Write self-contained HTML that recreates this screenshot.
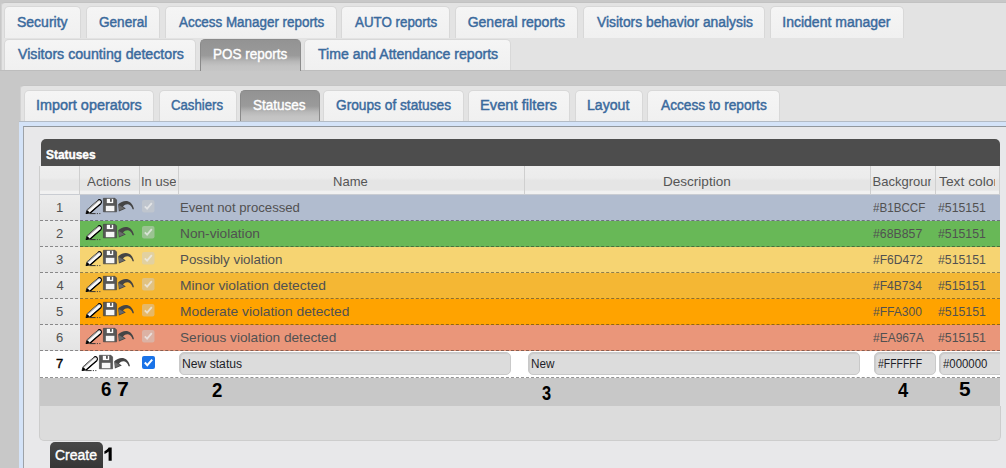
<!DOCTYPE html>
<html><head><meta charset="utf-8">
<style>
*{box-sizing:border-box;margin:0;padding:0}
html,body{width:1006px;height:468px;overflow:hidden;background:#c8c8c8;font-family:"Liberation Sans",sans-serif;position:relative}
.a{position:absolute}
.t{position:absolute;white-space:nowrap;line-height:20px;transform-origin:0 0}
.outer{left:1px;top:2px;width:1010px;height:68px;background:#e3e3e3;border:1px solid #d2d2d2;border-top-color:#c2c2c2;border-bottom:none;border-radius:4px 0 0 0}
.tab{position:absolute;height:32px;background:linear-gradient(#f5f5f5,#f0f0f0);border:1px solid #d8d8d8;border-bottom:none;border-radius:5px 5px 0 0}
.tab.act{background:linear-gradient(#939393 0%,#9a9a9a 50%,#b8b8b8 70%,#c3c3c3 84%,#c6c6c6 100%);border-color:#8a8a8a #8c8c8c #8c8c8c #8a8a8a}
.tt{color:#3a6a9d;-webkit-text-stroke:0.45px #3a6a9d}
.ta{color:#fff;-webkit-text-stroke:0.4px #fff}
.inner{left:20px;top:85px;width:1000px;height:400px;background:#e3e3e3;border-radius:4px 0 0 0;border-top:1px solid #c4c4c4;border-left:1px solid #d2d2d2}
.panel{left:19px;top:121px;width:1000px;height:360px;background:#d4e3f8;border-top:1px solid #b3bbc5}
.content{left:23px;top:126px;width:1000px;height:360px;background:#e8e8ea;border-top:1px solid #91979d;border-left:1px solid #9da2a8}
.cap{left:41px;top:139px;width:959px;height:27px;background:#4d4d4d;border-radius:5px 5px 0 0}
.hdr{top:166px;height:29px;background:linear-gradient(#eeeeee 0%,#ececec 42%,#e5e5e5 52%,#e5e5e5 86%,#f1f1f1 90%,#f1f1f1 100%);border-right:1px solid #cfcfcf;border-bottom:1px solid #c9ccd2;overflow:hidden}
.ht{color:#555}
.row{left:40px;width:960px;height:26px;border-bottom:1px dashed rgba(40,40,40,.5)}
.rn{left:0;top:0;width:40px;height:25px;background:linear-gradient(#ececec,#e4e4e4)}
.ct{color:#515151}
.ic{position:absolute}
.inp{position:absolute;top:1px;height:23px;background:#dcdcdc;border:1px solid #c9c9c9;border-radius:5px;box-shadow:inset 1px 1px 1px rgba(0,0,0,.08);overflow:hidden}
.footer{left:40px;top:378px;width:960px;height:28px;background:#c8c8c8}
.gbot{left:39px;top:406px;width:962px;height:35px;background:#dcdcdc;border:1px solid #cdcdcd;border-top:none;border-radius:0 0 5px 5px}
.btn{left:50px;top:442px;width:53px;height:30px;background:linear-gradient(#474747,#333);border-radius:5px}
.lbl{color:#000;font-weight:bold}
.it{color:#1e1e28}
.b7{color:#000;-webkit-text-stroke:0.4px #000}
</style></head><body>
<div class="a outer"></div>
<div class="tab" style="left:4px;top:6px;width:77px"></div>
<div class="tab" style="left:86px;top:6px;width:74px"></div>
<div class="tab" style="left:165px;top:6px;width:172px"></div>
<div class="tab" style="left:341px;top:6px;width:109px"></div>
<div class="tab" style="left:455px;top:6px;width:123px"></div>
<div class="tab" style="left:583px;top:6px;width:182px"></div>
<div class="tab" style="left:770px;top:6px;width:134px"></div>
<div class="a" style="left:0;top:70px;width:1006px;height:15px;background:#c8c8c8;border-top:1px solid #bdbdbd"></div>
<div class="tab" style="left:4px;top:39px;width:192px;height:31px"></div>
<div class="tab act" style="left:200px;top:39px;width:101px;height:32px"></div>
<div class="tab" style="left:304px;top:39px;width:207px;height:31px"></div>
<div class="a inner"></div>
<div class="tab" style="left:24px;top:90px;width:130px;height:31px"></div>
<div class="tab" style="left:159px;top:90px;width:78px;height:31px"></div>
<div class="tab act" style="left:240px;top:90px;width:80px;height:31px"></div>
<div class="tab" style="left:323px;top:90px;width:141px;height:31px"></div>
<div class="tab" style="left:468px;top:90px;width:102px;height:31px"></div>
<div class="tab" style="left:575px;top:90px;width:68px;height:31px"></div>
<div class="tab" style="left:647px;top:90px;width:133px;height:31px"></div>
<div class="a panel"></div>
<div class="a content"></div>
<div class="a cap"></div>
<div class="a hdr" style="left:40px;width:40px"></div>
<div class="a hdr" style="left:80px;width:60px"></div>
<div class="a hdr" style="left:140px;width:39px"></div>
<div class="a hdr" style="left:179px;width:346px"></div>
<div class="a hdr" style="left:525px;width:346px"></div>
<div class="a hdr" style="left:871px;width:65px"></div>
<div class="a hdr" style="left:936px;width:64px"></div>
<div class="a row" style="top:195px;background:linear-gradient(90deg,transparent 40px,#B1BCCF 40px)"><div class="a rn"></div><svg class="ic" style="left:44px;top:1px" width="54" height="20" viewBox="0 0 54 20">
<path d="M2 17.6 L6.1 16.96 L17 7.43 Q17.6 5 14.1 4.11 L3.2 13.64 Z" fill="#fafafa" stroke="#111" stroke-width="1" stroke-linejoin="round"/>
<path d="M3.6 14 L14.4 4.6" stroke="#9a9a9a" stroke-width="1.1"/>
<path d="M6.1 16.9 L17 7.4" stroke="#000" stroke-width="1.3"/>
<path d="M14.1 4.11 Q15.5 3 17 4.5 Q18 6 17 7.43" fill="#fff" stroke="#000" stroke-width="1.1"/>
<path d="M2 17.8 L3.4 14.2 L5.8 16.6 Z" fill="#000"/>
<path d="M5.6 17.6 H11.6" stroke="#333" stroke-width="1"/>
<path d="M12.8 17.6 H14 M15.2 17.6 H16.4" stroke="#444" stroke-width="1"/>
<path d="M19.4 2.3 H31 L32.6 3.9 V15.8 H19.4 Z" fill="#575757" stroke="#3c3c3c" stroke-width="0.6"/>
<rect x="22.8" y="2.8" width="6.4" height="4.3" fill="#fdfdfd"/>
<rect x="26" y="2.8" width="1.8" height="3" fill="#575757"/>
<rect x="21.8" y="9.8" width="8.6" height="5.4" fill="#f6f6f6"/>
<path d="M34.2 8.3 C39 4, 47.5 2.6, 50 13.2 L48.6 13.2 C47 8.2, 42.5 6.6, 39 10.6 L41.8 12.4 L34.9 15.4 Z" fill="#454545"/>
<path d="M34.6 9 L40.6 12.3 L35.3 14.6 Z" fill="#6a6a6a"/>
</svg><svg class="ic" style="left:102px;top:5px" width="13" height="13" viewBox="0 0 13 13"><rect x="0" y="0" width="12.5" height="12.5" rx="2" fill="rgba(205,205,205,0.5)"/><path d="M2.8 6.4 L5.1 8.6 L9.8 3.2" fill="none" stroke="rgba(240,240,240,0.72)" stroke-width="1.8"/></svg></div>
<div class="a row" style="top:221px;background:linear-gradient(90deg,transparent 40px,#68B857 40px)"><div class="a rn"></div><svg class="ic" style="left:44px;top:1px" width="54" height="20" viewBox="0 0 54 20">
<path d="M2 17.6 L6.1 16.96 L17 7.43 Q17.6 5 14.1 4.11 L3.2 13.64 Z" fill="#fafafa" stroke="#111" stroke-width="1" stroke-linejoin="round"/>
<path d="M3.6 14 L14.4 4.6" stroke="#9a9a9a" stroke-width="1.1"/>
<path d="M6.1 16.9 L17 7.4" stroke="#000" stroke-width="1.3"/>
<path d="M14.1 4.11 Q15.5 3 17 4.5 Q18 6 17 7.43" fill="#fff" stroke="#000" stroke-width="1.1"/>
<path d="M2 17.8 L3.4 14.2 L5.8 16.6 Z" fill="#000"/>
<path d="M5.6 17.6 H11.6" stroke="#333" stroke-width="1"/>
<path d="M12.8 17.6 H14 M15.2 17.6 H16.4" stroke="#444" stroke-width="1"/>
<path d="M19.4 2.3 H31 L32.6 3.9 V15.8 H19.4 Z" fill="#575757" stroke="#3c3c3c" stroke-width="0.6"/>
<rect x="22.8" y="2.8" width="6.4" height="4.3" fill="#fdfdfd"/>
<rect x="26" y="2.8" width="1.8" height="3" fill="#575757"/>
<rect x="21.8" y="9.8" width="8.6" height="5.4" fill="#f6f6f6"/>
<path d="M34.2 8.3 C39 4, 47.5 2.6, 50 13.2 L48.6 13.2 C47 8.2, 42.5 6.6, 39 10.6 L41.8 12.4 L34.9 15.4 Z" fill="#454545"/>
<path d="M34.6 9 L40.6 12.3 L35.3 14.6 Z" fill="#6a6a6a"/>
</svg><svg class="ic" style="left:102px;top:5px" width="13" height="13" viewBox="0 0 13 13"><rect x="0" y="0" width="12.5" height="12.5" rx="2" fill="rgba(205,205,205,0.5)"/><path d="M2.8 6.4 L5.1 8.6 L9.8 3.2" fill="none" stroke="rgba(240,240,240,0.72)" stroke-width="1.8"/></svg></div>
<div class="a row" style="top:247px;background:linear-gradient(90deg,transparent 40px,#F6D472 40px)"><div class="a rn"></div><svg class="ic" style="left:44px;top:1px" width="54" height="20" viewBox="0 0 54 20">
<path d="M2 17.6 L6.1 16.96 L17 7.43 Q17.6 5 14.1 4.11 L3.2 13.64 Z" fill="#fafafa" stroke="#111" stroke-width="1" stroke-linejoin="round"/>
<path d="M3.6 14 L14.4 4.6" stroke="#9a9a9a" stroke-width="1.1"/>
<path d="M6.1 16.9 L17 7.4" stroke="#000" stroke-width="1.3"/>
<path d="M14.1 4.11 Q15.5 3 17 4.5 Q18 6 17 7.43" fill="#fff" stroke="#000" stroke-width="1.1"/>
<path d="M2 17.8 L3.4 14.2 L5.8 16.6 Z" fill="#000"/>
<path d="M5.6 17.6 H11.6" stroke="#333" stroke-width="1"/>
<path d="M12.8 17.6 H14 M15.2 17.6 H16.4" stroke="#444" stroke-width="1"/>
<path d="M19.4 2.3 H31 L32.6 3.9 V15.8 H19.4 Z" fill="#575757" stroke="#3c3c3c" stroke-width="0.6"/>
<rect x="22.8" y="2.8" width="6.4" height="4.3" fill="#fdfdfd"/>
<rect x="26" y="2.8" width="1.8" height="3" fill="#575757"/>
<rect x="21.8" y="9.8" width="8.6" height="5.4" fill="#f6f6f6"/>
<path d="M34.2 8.3 C39 4, 47.5 2.6, 50 13.2 L48.6 13.2 C47 8.2, 42.5 6.6, 39 10.6 L41.8 12.4 L34.9 15.4 Z" fill="#454545"/>
<path d="M34.6 9 L40.6 12.3 L35.3 14.6 Z" fill="#6a6a6a"/>
</svg><svg class="ic" style="left:102px;top:5px" width="13" height="13" viewBox="0 0 13 13"><rect x="0" y="0" width="12.5" height="12.5" rx="2" fill="rgba(205,205,205,0.5)"/><path d="M2.8 6.4 L5.1 8.6 L9.8 3.2" fill="none" stroke="rgba(240,240,240,0.72)" stroke-width="1.8"/></svg></div>
<div class="a row" style="top:273px;background:linear-gradient(90deg,transparent 40px,#F4B734 40px)"><div class="a rn"></div><svg class="ic" style="left:44px;top:1px" width="54" height="20" viewBox="0 0 54 20">
<path d="M2 17.6 L6.1 16.96 L17 7.43 Q17.6 5 14.1 4.11 L3.2 13.64 Z" fill="#fafafa" stroke="#111" stroke-width="1" stroke-linejoin="round"/>
<path d="M3.6 14 L14.4 4.6" stroke="#9a9a9a" stroke-width="1.1"/>
<path d="M6.1 16.9 L17 7.4" stroke="#000" stroke-width="1.3"/>
<path d="M14.1 4.11 Q15.5 3 17 4.5 Q18 6 17 7.43" fill="#fff" stroke="#000" stroke-width="1.1"/>
<path d="M2 17.8 L3.4 14.2 L5.8 16.6 Z" fill="#000"/>
<path d="M5.6 17.6 H11.6" stroke="#333" stroke-width="1"/>
<path d="M12.8 17.6 H14 M15.2 17.6 H16.4" stroke="#444" stroke-width="1"/>
<path d="M19.4 2.3 H31 L32.6 3.9 V15.8 H19.4 Z" fill="#575757" stroke="#3c3c3c" stroke-width="0.6"/>
<rect x="22.8" y="2.8" width="6.4" height="4.3" fill="#fdfdfd"/>
<rect x="26" y="2.8" width="1.8" height="3" fill="#575757"/>
<rect x="21.8" y="9.8" width="8.6" height="5.4" fill="#f6f6f6"/>
<path d="M34.2 8.3 C39 4, 47.5 2.6, 50 13.2 L48.6 13.2 C47 8.2, 42.5 6.6, 39 10.6 L41.8 12.4 L34.9 15.4 Z" fill="#454545"/>
<path d="M34.6 9 L40.6 12.3 L35.3 14.6 Z" fill="#6a6a6a"/>
</svg><svg class="ic" style="left:102px;top:5px" width="13" height="13" viewBox="0 0 13 13"><rect x="0" y="0" width="12.5" height="12.5" rx="2" fill="rgba(205,205,205,0.5)"/><path d="M2.8 6.4 L5.1 8.6 L9.8 3.2" fill="none" stroke="rgba(240,240,240,0.72)" stroke-width="1.8"/></svg></div>
<div class="a row" style="top:299px;background:linear-gradient(90deg,transparent 40px,#FFA300 40px)"><div class="a rn"></div><svg class="ic" style="left:44px;top:1px" width="54" height="20" viewBox="0 0 54 20">
<path d="M2 17.6 L6.1 16.96 L17 7.43 Q17.6 5 14.1 4.11 L3.2 13.64 Z" fill="#fafafa" stroke="#111" stroke-width="1" stroke-linejoin="round"/>
<path d="M3.6 14 L14.4 4.6" stroke="#9a9a9a" stroke-width="1.1"/>
<path d="M6.1 16.9 L17 7.4" stroke="#000" stroke-width="1.3"/>
<path d="M14.1 4.11 Q15.5 3 17 4.5 Q18 6 17 7.43" fill="#fff" stroke="#000" stroke-width="1.1"/>
<path d="M2 17.8 L3.4 14.2 L5.8 16.6 Z" fill="#000"/>
<path d="M5.6 17.6 H11.6" stroke="#333" stroke-width="1"/>
<path d="M12.8 17.6 H14 M15.2 17.6 H16.4" stroke="#444" stroke-width="1"/>
<path d="M19.4 2.3 H31 L32.6 3.9 V15.8 H19.4 Z" fill="#575757" stroke="#3c3c3c" stroke-width="0.6"/>
<rect x="22.8" y="2.8" width="6.4" height="4.3" fill="#fdfdfd"/>
<rect x="26" y="2.8" width="1.8" height="3" fill="#575757"/>
<rect x="21.8" y="9.8" width="8.6" height="5.4" fill="#f6f6f6"/>
<path d="M34.2 8.3 C39 4, 47.5 2.6, 50 13.2 L48.6 13.2 C47 8.2, 42.5 6.6, 39 10.6 L41.8 12.4 L34.9 15.4 Z" fill="#454545"/>
<path d="M34.6 9 L40.6 12.3 L35.3 14.6 Z" fill="#6a6a6a"/>
</svg><svg class="ic" style="left:102px;top:5px" width="13" height="13" viewBox="0 0 13 13"><rect x="0" y="0" width="12.5" height="12.5" rx="2" fill="rgba(205,205,205,0.5)"/><path d="M2.8 6.4 L5.1 8.6 L9.8 3.2" fill="none" stroke="rgba(240,240,240,0.72)" stroke-width="1.8"/></svg></div>
<div class="a row" style="top:325px;background:linear-gradient(90deg,transparent 40px,#EA967A 40px)"><div class="a rn"></div><svg class="ic" style="left:44px;top:1px" width="54" height="20" viewBox="0 0 54 20">
<path d="M2 17.6 L6.1 16.96 L17 7.43 Q17.6 5 14.1 4.11 L3.2 13.64 Z" fill="#fafafa" stroke="#111" stroke-width="1" stroke-linejoin="round"/>
<path d="M3.6 14 L14.4 4.6" stroke="#9a9a9a" stroke-width="1.1"/>
<path d="M6.1 16.9 L17 7.4" stroke="#000" stroke-width="1.3"/>
<path d="M14.1 4.11 Q15.5 3 17 4.5 Q18 6 17 7.43" fill="#fff" stroke="#000" stroke-width="1.1"/>
<path d="M2 17.8 L3.4 14.2 L5.8 16.6 Z" fill="#000"/>
<path d="M5.6 17.6 H11.6" stroke="#333" stroke-width="1"/>
<path d="M12.8 17.6 H14 M15.2 17.6 H16.4" stroke="#444" stroke-width="1"/>
<path d="M19.4 2.3 H31 L32.6 3.9 V15.8 H19.4 Z" fill="#575757" stroke="#3c3c3c" stroke-width="0.6"/>
<rect x="22.8" y="2.8" width="6.4" height="4.3" fill="#fdfdfd"/>
<rect x="26" y="2.8" width="1.8" height="3" fill="#575757"/>
<rect x="21.8" y="9.8" width="8.6" height="5.4" fill="#f6f6f6"/>
<path d="M34.2 8.3 C39 4, 47.5 2.6, 50 13.2 L48.6 13.2 C47 8.2, 42.5 6.6, 39 10.6 L41.8 12.4 L34.9 15.4 Z" fill="#454545"/>
<path d="M34.6 9 L40.6 12.3 L35.3 14.6 Z" fill="#6a6a6a"/>
</svg><svg class="ic" style="left:102px;top:5px" width="13" height="13" viewBox="0 0 13 13"><rect x="0" y="0" width="12.5" height="12.5" rx="2" fill="rgba(205,205,205,0.5)"/><path d="M2.8 6.4 L5.1 8.6 L9.8 3.2" fill="none" stroke="rgba(240,240,240,0.72)" stroke-width="1.8"/></svg></div>
<div class="a row" style="top:351px;height:27px;background:#fff;overflow:hidden"><svg class="ic" style="left:40px;top:2px" width="54" height="20" viewBox="0 0 54 20">
<path d="M2 17.6 L6.1 16.96 L17 7.43 Q17.6 5 14.1 4.11 L3.2 13.64 Z" fill="#fafafa" stroke="#111" stroke-width="1" stroke-linejoin="round"/>
<path d="M3.6 14 L14.4 4.6" stroke="#9a9a9a" stroke-width="1.1"/>
<path d="M6.1 16.9 L17 7.4" stroke="#000" stroke-width="1.3"/>
<path d="M14.1 4.11 Q15.5 3 17 4.5 Q18 6 17 7.43" fill="#fff" stroke="#000" stroke-width="1.1"/>
<path d="M2 17.8 L3.4 14.2 L5.8 16.6 Z" fill="#000"/>
<path d="M5.6 17.6 H11.6" stroke="#333" stroke-width="1"/>
<path d="M12.8 17.6 H14 M15.2 17.6 H16.4" stroke="#444" stroke-width="1"/>
<path d="M19.4 2.3 H31 L32.6 3.9 V15.8 H19.4 Z" fill="#575757" stroke="#3c3c3c" stroke-width="0.6"/>
<rect x="22.8" y="2.8" width="6.4" height="4.3" fill="#fdfdfd"/>
<rect x="26" y="2.8" width="1.8" height="3" fill="#575757"/>
<rect x="21.8" y="9.8" width="8.6" height="5.4" fill="#f6f6f6"/>
<path d="M34.2 8.3 C39 4, 47.5 2.6, 50 13.2 L48.6 13.2 C47 8.2, 42.5 6.6, 39 10.6 L41.8 12.4 L34.9 15.4 Z" fill="#454545"/>
<path d="M34.6 9 L40.6 12.3 L35.3 14.6 Z" fill="#6a6a6a"/>
</svg><svg class="ic" style="left:102px;top:5px" width="13" height="13" viewBox="0 0 13 13"><rect x="0" y="0" width="13" height="13" rx="2" fill="#1a73e8"/><path d="M2.8 6.5 L5.3 9.2 L10.2 3.6" fill="none" stroke="#fff" stroke-width="2"/></svg><div class="inp" style="left:139px;width:332px"></div><div class="inp" style="left:488px;width:332px"></div><div class="inp" style="left:834px;width:62px"></div><div class="inp" style="left:899px;width:70px"></div></div>
<div class="a footer"></div>
<div class="a gbot"></div>
<div class="a" style="left:39px;top:166px;width:1px;height:270px;background:#cdcdcd"></div>
<div class="a btn"></div>
<div class="t tt" style="left:17.00px;top:12px;font-size:14px;">Security</div>
<div class="t tt" style="left:99.03px;top:12px;font-size:14px;transform:scaleX(0.9688);">General</div>
<div class="t tt" style="left:178.80px;top:12px;font-size:14px;transform:scaleX(0.9576);">Access Manager reports</div>
<div class="t tt" style="left:354.80px;top:12px;font-size:14px;transform:scaleX(0.9535);">AUTO reports</div>
<div class="t tt" style="left:467.70px;top:12px;font-size:14px;">General reports</div>
<div class="t tt" style="left:596.80px;top:12px;font-size:14px;transform:scaleX(0.9885);">Visitors behavior analysis</div>
<div class="t tt" style="left:782.30px;top:12px;font-size:14px;">Incident manager</div>
<div class="t tt" style="left:17.50px;top:44px;font-size:14px;transform:scaleX(1.0122);">Visitors counting detectors</div>
<div class="t ta" style="left:213.04px;top:44px;font-size:14px;transform:scaleX(0.9632);">POS reports</div>
<div class="t tt" style="left:318.20px;top:44px;font-size:14px;transform:scaleX(1.0050);">Time and Attendance reports</div>
<div class="t tt" style="left:36.27px;top:95px;font-size:14px;transform:scaleX(1.0297);">Import operators</div>
<div class="t tt" style="left:171.46px;top:95px;font-size:14px;transform:scaleX(0.9426);">Cashiers</div>
<div class="t ta" style="left:253.23px;top:95px;font-size:14px;transform:scaleX(0.9660);">Statuses</div>
<div class="t tt" style="left:335.62px;top:95px;font-size:14px;transform:scaleX(0.9793);">Groups of statuses</div>
<div class="t tt" style="left:479.95px;top:95px;font-size:14px;transform:scaleX(1.0514);">Event filters</div>
<div class="t tt" style="left:586.99px;top:95px;font-size:14px;transform:scaleX(1.0073);">Layout</div>
<div class="t tt" style="left:661.10px;top:95px;font-size:14px;transform:scaleX(0.9778);">Access to reports</div>
<div class="t ta" style="left:45.71px;top:145px;font-size:12px;font-weight:bold;transform:scaleX(0.9918);">Statuses</div>
<div class="t ht" style="left:87.00px;top:172px;font-size:13px;transform:scaleX(1.0238);">Actions</div>
<div class="a" style="left:140px;top:0;width:36px;height:468px;overflow:hidden"><div class="a" style="left:-140px;top:0;width:1006px;height:468px"><div class="t ht" style="left:141.00px;top:172px;font-size:13px;">In use</div></div></div>
<div class="t ht" style="left:333.10px;top:172px;font-size:13px;">Name</div>
<div class="t ht" style="left:662.86px;top:172px;font-size:13px;transform:scaleX(1.0413);">Description</div>
<div class="a" style="left:871px;top:0;width:60px;height:468px;overflow:hidden"><div class="a" style="left:-871px;top:0;width:1006px;height:468px"><div class="t ht" style="left:872.50px;top:172px;font-size:13px;">Background</div></div></div>
<div class="a" style="left:936px;top:0;width:59px;height:468px;overflow:hidden"><div class="a" style="left:-936px;top:0;width:1006px;height:468px"><div class="t ht" style="left:938.50px;top:172px;font-size:13px;transform:scaleX(1.0625);">Text color</div></div></div>
<div class="t ct" style="left:56.00px;top:198px;font-size:13px;">1</div>
<div class="t ct" style="left:180.29px;top:198px;font-size:13px;transform:scaleX(1.0120);">Event not processed</div>
<div class="t ct" style="left:872.80px;top:198px;font-size:13px;transform:scaleX(0.8931);">#B1BCCF</div>
<div class="t ct" style="left:937.90px;top:198px;font-size:13px;transform:scaleX(0.9460);">#515151</div>
<div class="t ct" style="left:56.00px;top:224px;font-size:13px;">2</div>
<div class="t ct" style="left:180.25px;top:224px;font-size:13px;transform:scaleX(1.0527);">Non-violation</div>
<div class="t ct" style="left:872.80px;top:224px;font-size:13px;transform:scaleX(0.9462);">#68B857</div>
<div class="t ct" style="left:937.90px;top:224px;font-size:13px;transform:scaleX(0.9460);">#515151</div>
<div class="t ct" style="left:56.00px;top:250px;font-size:13px;">3</div>
<div class="t ct" style="left:180.27px;top:250px;font-size:13px;transform:scaleX(1.0276);">Possibly violation</div>
<div class="t ct" style="left:872.80px;top:250px;font-size:13px;transform:scaleX(0.9283);">#F6D472</div>
<div class="t ct" style="left:937.90px;top:250px;font-size:13px;transform:scaleX(0.9460);">#515151</div>
<div class="t ct" style="left:56.50px;top:276px;font-size:13px;">4</div>
<div class="t ct" style="left:180.24px;top:276px;font-size:13px;transform:scaleX(1.0625);">Minor violation detected</div>
<div class="t ct" style="left:872.80px;top:276px;font-size:13px;transform:scaleX(0.9283);">#F4B734</div>
<div class="t ct" style="left:937.90px;top:276px;font-size:13px;transform:scaleX(0.9460);">#515151</div>
<div class="t ct" style="left:56.00px;top:302px;font-size:13px;">5</div>
<div class="t ct" style="left:180.24px;top:302px;font-size:13px;transform:scaleX(1.0608);">Moderate violation detected</div>
<div class="t ct" style="left:872.80px;top:302px;font-size:13px;transform:scaleX(0.9269);">#FFA300</div>
<div class="t ct" style="left:937.90px;top:302px;font-size:13px;transform:scaleX(0.9460);">#515151</div>
<div class="t ct" style="left:56.00px;top:328px;font-size:13px;">6</div>
<div class="t ct" style="left:180.25px;top:328px;font-size:13px;transform:scaleX(1.0497);">Serious violation detected</div>
<div class="t ct" style="left:872.80px;top:328px;font-size:13px;transform:scaleX(0.9236);">#EA967A</div>
<div class="t ct" style="left:937.90px;top:328px;font-size:13px;transform:scaleX(0.9460);">#515151</div>
<div class="t b7" style="left:56.00px;top:354px;font-size:13px;">7</div>
<div class="t it" style="left:182.23px;top:354px;font-size:12.5px;transform:scaleX(0.9717);">New status</div>
<div class="t it" style="left:531.46px;top:354px;font-size:12.5px;transform:scaleX(0.9375);">New</div>
<div class="t it" style="left:877.70px;top:354px;font-size:12.5px;transform:scaleX(0.8340);">#FFFFFF</div>
<div class="t it" style="left:943.00px;top:354px;font-size:12.5px;transform:scaleX(0.9125);">#000000</div>
<div class="t ta" style="left:55.00px;top:445px;font-size:14px;">Create</div>
<div class="t lbl" style="left:100.77px;top:379px;font-size:20px;font-weight:bold;transform:scaleX(0.9300);">6</div>
<div class="t lbl" style="left:117.34px;top:379px;font-size:20px;font-weight:bold;transform:scaleX(1.0556);">7</div>
<div class="t lbl" style="left:211.77px;top:380px;font-size:20px;font-weight:bold;transform:scaleX(0.9300);">2</div>
<div class="t lbl" style="left:542.00px;top:383px;font-size:20px;font-weight:bold;transform:scaleX(0.8182);">3</div>
<div class="t lbl" style="left:898.30px;top:380px;font-size:20px;font-weight:bold;transform:scaleX(0.9182);">4</div>
<div class="t lbl" style="left:959.26px;top:379px;font-size:20px;font-weight:bold;transform:scaleX(1.0400);">5</div>
<svg class="a" style="left:100px;top:444px" width="16" height="20" viewBox="100 444 16 20"><path d="M108.6 447.6 H111.7 V460.7 H108.6 V451.6 Q106.8 453.2 104.4 454.1 V451.2 Q105.8 450.6 107 449.6 Q108.2 448.6 108.6 447.6 Z" fill="#000"/></svg>
</body></html>
